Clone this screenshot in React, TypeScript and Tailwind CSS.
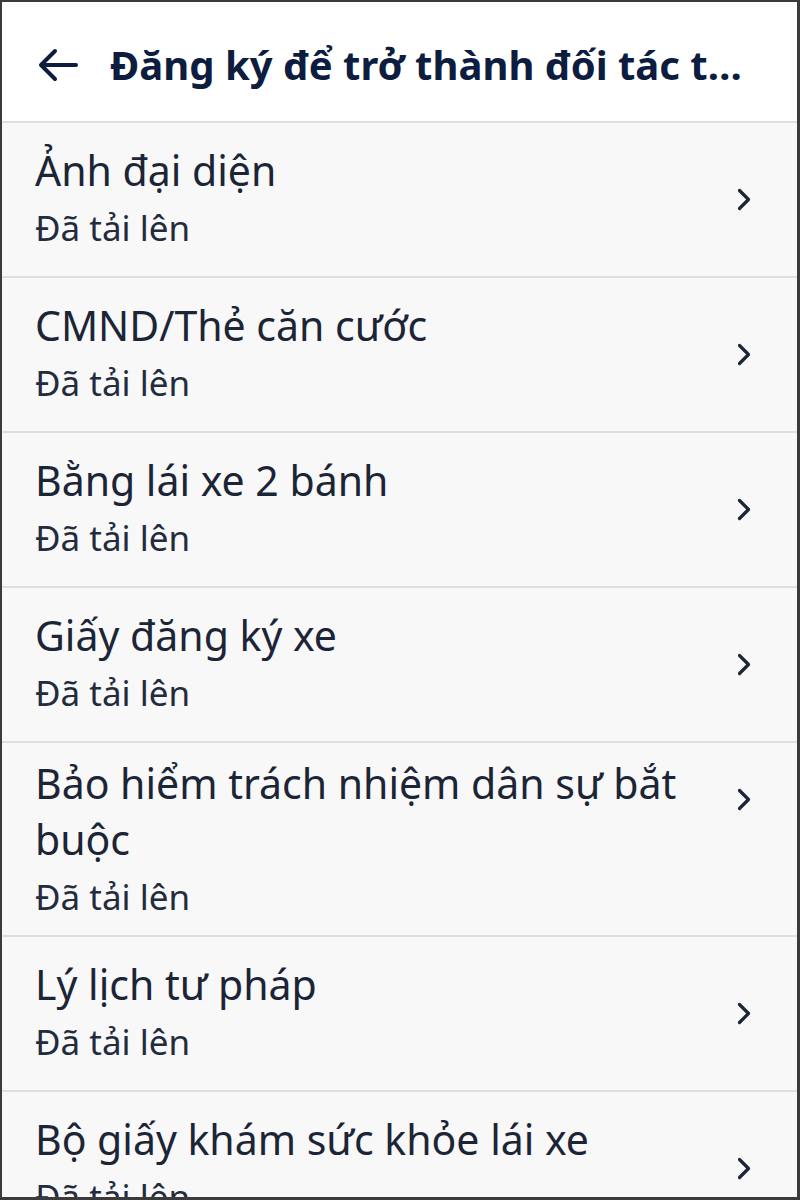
import React from 'react';

interface DocItem {
  title: string;
  status: string;
  multiline?: boolean;
}

const DOCS: DocItem[] = [
  { title: 'Ảnh đại diện', status: 'Đã tải lên' },
  { title: 'CMND/Thẻ căn cước', status: 'Đã tải lên' },
  { title: 'Bằng lái xe 2 bánh', status: 'Đã tải lên' },
  { title: 'Giấy đăng ký xe', status: 'Đã tải lên' },
  { title: 'Bảo hiểm trách nhiệm dân sự bắt buộc', status: 'Đã tải lên', multiline: true },
  { title: 'Lý lịch tư pháp', status: 'Đã tải lên' },
  { title: 'Bộ giấy khám sức khỏe lái xe', status: 'Đã tải lên' },
];

const ArrowLeft = () => (
  <svg width="40" height="34" viewBox="0 0 40 34" fill="none">
    <path d="M38 17H4M17 3L3 17l14 14" stroke="#0c1d40" strokeWidth="4" strokeLinecap="round" strokeLinejoin="round" />
  </svg>
);

const Chevron = () => (
  <svg width="14" height="23" viewBox="0 0 14 23" fill="none">
    <path d="M2.5 2.5l9 9-9 9" stroke="#1c2536" strokeWidth="3.2" strokeLinecap="round" strokeLinejoin="round" />
  </svg>
);

function DocRow({ item }: { item: DocItem }) {
  return (
    <div
      className={`flex min-h-[155px] border-b-2 border-[#dedfe1] pl-[33px] pr-[46px] ${
        item.multiline ? 'items-start pt-[12px] pb-[8px]' : 'items-center'
      }`}
    >
      <div className="flex-1 min-w-0 pr-[30px]">
        <div className="text-[41px] leading-[56px] text-[#1c2536]">{item.title}</div>
        <div className="text-[35px] leading-[60px] text-[#232c3d]">{item.status}</div>
      </div>
      <div className={item.multiline ? 'mt-[33px]' : ''}>
        <Chevron />
      </div>
    </div>
  );
}

export default function App() {
  return (
    <div
      className="w-[800px] h-[1200px] overflow-hidden border-2 border-r-[3px] border-b-[3px] border-[#3b3b3b] bg-[#f8f8f9]"
      style={{ fontFamily: '"Noto Sans", "Open Sans", sans-serif' }}
    >
      <div className="flex items-center h-[121px] bg-white border-b-2 border-[#dedfe1] pt-[6px] pl-[36px] pr-[44px]">
        <ArrowLeft />
        <h1 className="ml-[32px] flex-1 min-w-0 truncate text-[40px] font-bold text-[#0c1d40] leading-[56px]">
          Đăng ký để trở thành đối tác tài xế
        </h1>
      </div>
      <div>
        {DOCS.map((item) => (
          <DocRow key={item.title} item={item} />
        ))}
      </div>
    </div>
  );
}
